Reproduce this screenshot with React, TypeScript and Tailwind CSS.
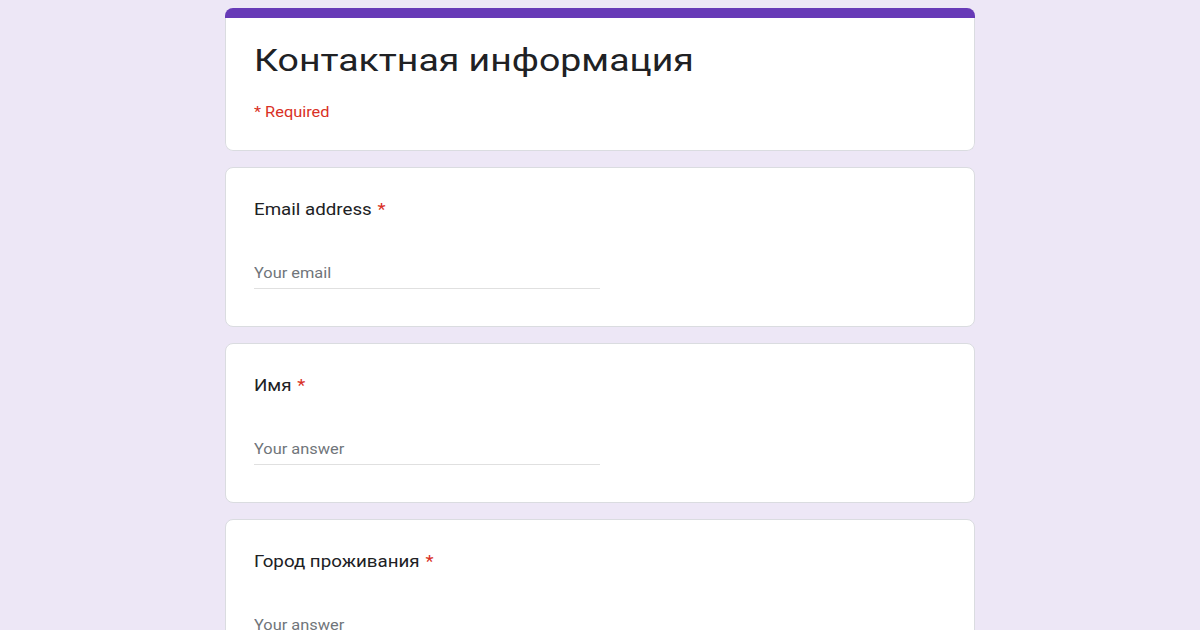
const questions = [
  { label: "Email address", placeholder: "Your email" },
  { label: "Имя", placeholder: "Your answer" },
  { label: "Город проживания", placeholder: "Your answer" },
  { label: "Номер телефона", placeholder: "Your answer" },
];

// the reference render is stretched sideways, so the text gets the same stretch
const wide = "inline-block origin-left scale-x-[1.17]";

function QuestionCard({ label, placeholder }: { label: string; placeholder: string }) {
  return (
    <div className="rounded-lg border border-[#dadce0] bg-white px-[28px] pt-[30px] pb-[37px]">
      <div className="font-['Roboto',sans-serif] text-base leading-6 text-[#202124]">
        <span className={wide}>
          {label}
          <span className="ml-[5px] text-[#d93025]">*</span>
        </span>
      </div>
      <div className="mt-[41px] w-1/2 border-b border-[#e0e0e0] pb-[5px]">
        <div className="font-['Roboto',sans-serif] text-sm leading-5 text-[#70757a]">
          <span className={wide}>{placeholder}</span>
        </div>
      </div>
    </div>
  );
}

export default function App() {
  return (
    <div className="h-screen overflow-hidden bg-[#ede7f6]">
      <div className="mx-auto flex w-[750px] flex-col gap-4 pt-2">
        <div className="overflow-hidden rounded-lg">
          <div className="h-[10px] bg-[#673ab7]" />
          <div className="rounded-b-lg border-x border-b border-[#dadce0] bg-white px-[28px] pt-[22px] pb-[28px]">
            <h1 className="font-['Roboto',sans-serif] text-[32px] leading-10 text-[#202124]">
              <span className={wide}>Контактная информация</span>
            </h1>
            <div className="mt-[22px] font-['Roboto',sans-serif] text-sm leading-5 text-[#d93025]">
              <span className={wide}>* Required</span>
            </div>
          </div>
        </div>
        {questions.map((q) => (
          <QuestionCard key={q.label} label={q.label} placeholder={q.placeholder} />
        ))}
      </div>
    </div>
  );
}
